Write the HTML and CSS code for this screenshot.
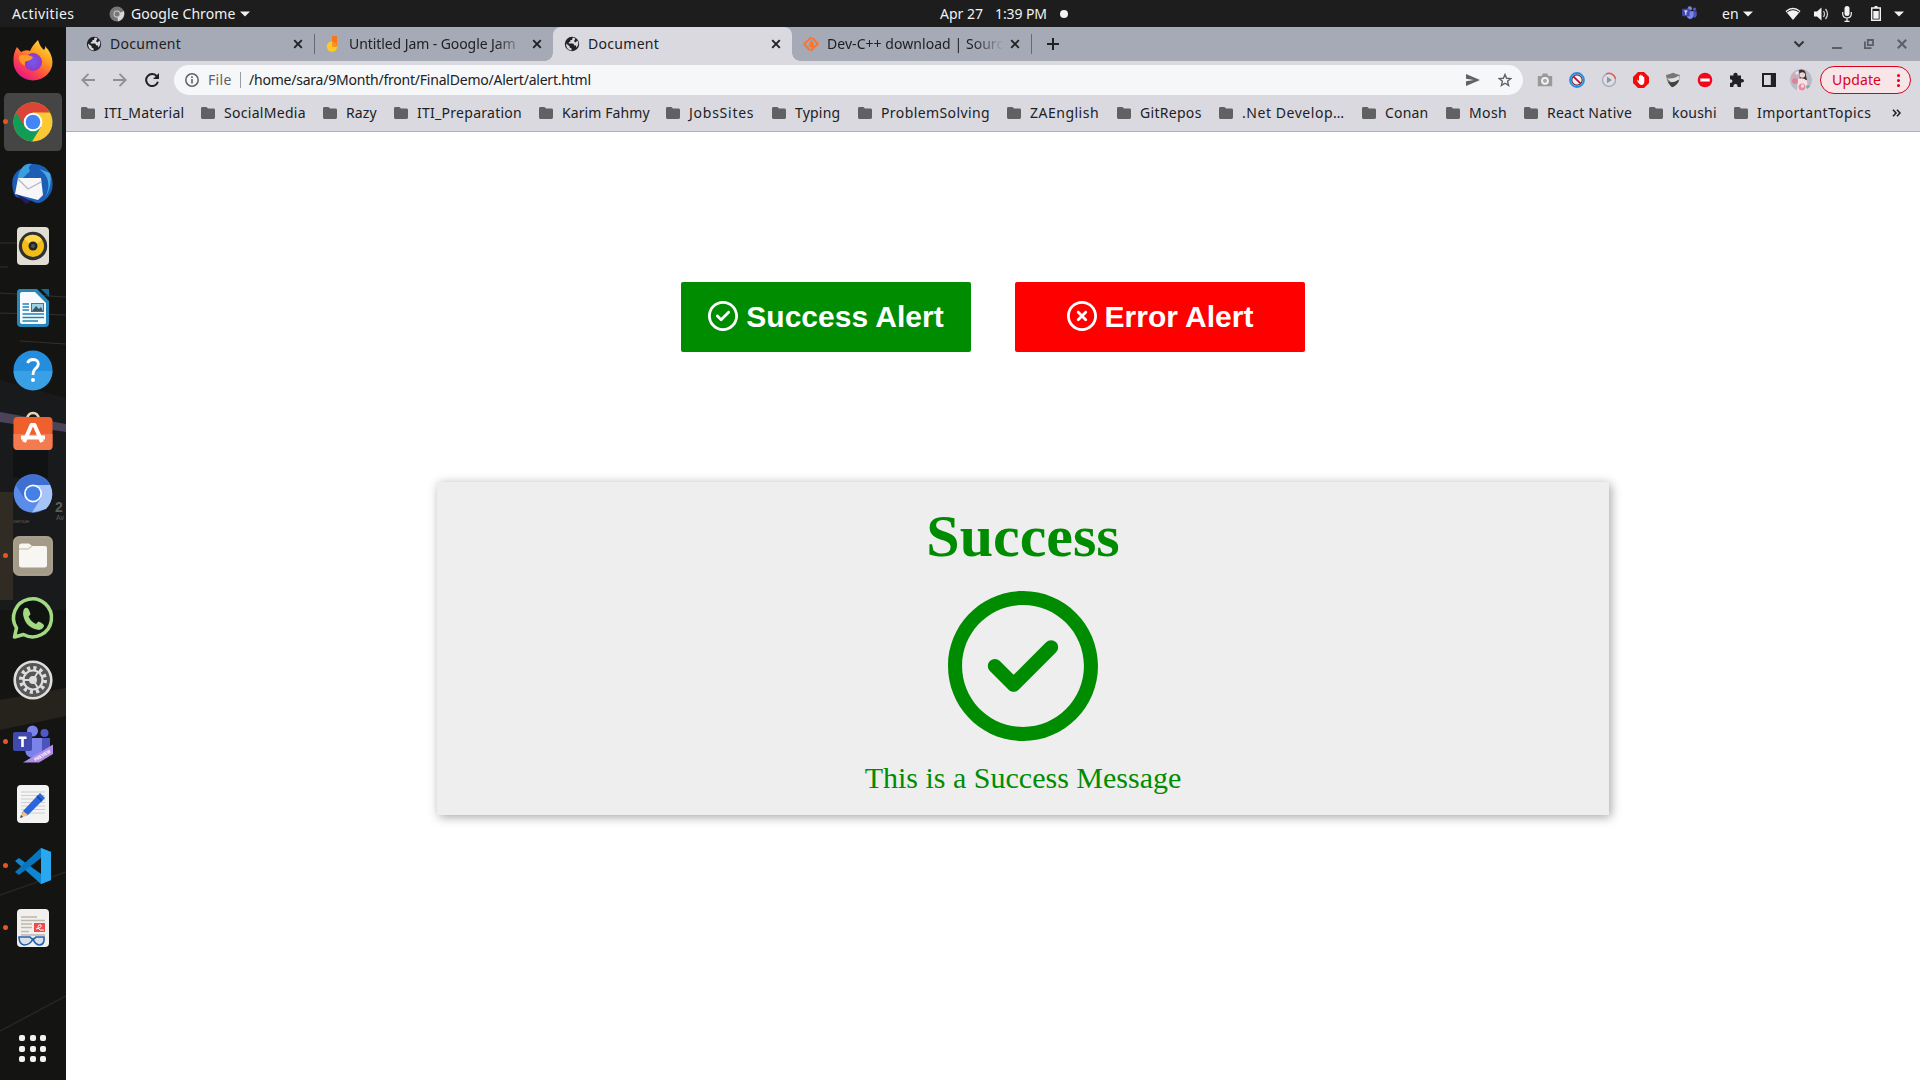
FILE: index.html
```html
<!DOCTYPE html>
<html lang="en">
<head>
<meta charset="utf-8">
<title>Document</title>
<link rel="stylesheet" href="styles.css">
</head>
<body>
<svg class="defs" width="0" height="0">
  <symbol id="folder" viewBox="0 0 14 12"><path d="M1.5 0H5.5L7 1.6H12.5Q14 1.6 14 3V10.6Q14 12 12.6 12H1.4Q0 12 0 10.6V1.4Q0 0 1.5 0z"/></symbol>
  <symbol id="close" viewBox="0 0 10 10"><path d="M1.2 1.2L8.8 8.8M8.8 1.2L1.2 8.8" fill="none" stroke="currentColor" stroke-width="1.9"/></symbol>
  <symbol id="globe" viewBox="0 0 16 16"><circle cx="8" cy="8" r="7.2" fill="#202124"/><path d="M2.2 7.4L5.6 10.2V11.6L7.6 12.4V14.4Q3 13.8 2.2 9.4zM9.3 1.5Q7.6 2.4 8.2 4H6.4V5.6L4.8 6.2V7.6H9.2L10.4 9.6H12L12.4 11.8Q15.6 8 13.4 4.6L11.6 6.4L10 5.2L11.4 2.5z" fill="#dad9df"/></symbol>
  <symbol id="caret" viewBox="0 0 10 6"><path d="M0 .4H10L5 5.6z" fill="#f2f2f2"/></symbol>
  <symbol id="ring" viewBox="0 0 512 512"><path fill="currentColor" d="M512 256C512 397.4 397.4 512 256 512C114.6 512 0 397.4 0 256C0 114.6 114.6 0 256 0C397.4 0 512 114.6 512 256zM256 48C141.1 48 48 141.1 48 256C48 370.9 141.1 464 256 464C370.9 464 464 370.9 464 256C464 141.1 370.9 48 256 48z"/></symbol>
  <symbol id="check-circle" viewBox="0 0 512 512"><use href="#ring"/><path fill="currentColor" d="M369 209L241 337c-9.400 9.400-24.600 9.400-33.900 0l-64-64c-9.400-9.400-9.400-24.600 0-33.900s24.600-9.400 33.900 0l47 47L335 175c9.400-9.400 24.600-9.400 33.900 0s9.400 24.600 0 33.900z"/></symbol>
  <symbol id="x-circle" viewBox="0 0 512 512"><use href="#ring"/><path fill="currentColor" d="M175 175c9.400-9.400 24.600-9.400 33.900 0l47 47 47-47c9.400-9.400 24.600-9.400 33.900 0s9.400 24.600 0 33.900l-47 47 47 47c9.400 9.400 9.400 24.600 0 33.900s-24.600 9.400-33.900 0l-47-47-47 47c-9.400 9.400-24.600 9.400-33.900 0s-9.400-24.600 0-33.900l47-47-47-47c-9.400-9.400-9.400-24.600 0-33.900z"/></symbol>
  <symbol id="teams" viewBox="0 0 40 38"><circle cx="31.500" cy="8" r="4" fill="#5059c9"/><path d="M22 13H37V24Q36 30 30 30z" fill="#4b53bc"/><circle cx="19.500" cy="6" r="5.500" fill="#7b83eb"/><path d="M12 13H29V25Q28 33 20.500 33Q13 33 12 25z" fill="#7b83eb"/><rect y="7" width="19" height="19" rx="2" fill="#4149ae"/><path d="M5.500 11.500H13.500V14H10.800V22H8.200V14H5.500z" fill="#fff"/></symbol>
</svg>

<header class="topbar">
  <span class="activities">Activities</span>
  <div class="app-menu">
    <svg width="16" height="16" viewBox="0 0 16 16"><circle cx="8" cy="8" r="7.500" fill="#777"/><path d="M8 8L15 5Q16.500 12 9 15.500z" fill="#d8d8d8"/><circle cx="8" cy="8" r="3.500" fill="#ccc"/><circle cx="8" cy="8" r="2.500" fill="#777"/></svg>
    <span class="app-name">Google Chrome</span>
    <svg width="10" height="6"><use href="#caret"/></svg>
  </div>
  <div class="clock"><span class="date">Apr 27</span><span class="time">1:39 PM</span><i class="dot"></i></div>
  <div class="tray">
    <svg class="tray-teams" width="16" height="15"><use href="#teams"/></svg>
    <span class="lang">en</span>
    <svg class="lang-caret" width="10" height="6"><use href="#caret"/></svg>
    <svg class="wifi" width="16" height="14" viewBox="0 0 16 14"><path d="M.5 4Q8-2.500 15.500 4L8 13z" fill="#f2f2f2"/><path d="M2 5Q8 .4 14 5" fill="none" stroke="#1d1d1d" stroke-width="1"/></svg>
    <svg class="volume" width="15" height="14" viewBox="0 0 15 14"><path d="M0 4.500H3L7.500.5V13.500L3 9.500H0z" fill="#f2f2f2"/><path d="M9.500 4Q11.500 7 9.500 10M11.500 2Q15.500 7 11.500 12" fill="none" stroke="#ccc" stroke-width="1.300"/></svg>
    <svg class="mic" width="10" height="16" viewBox="0 0 10 16"><rect x="2.500" width="5" height="10" rx="2.500" fill="#f2f2f2"/><path d="M.7 6V8Q1 12 5 12Q9 12 9.300 8V6M5 12V15M2.500 15.400H7.500" fill="none" stroke="#f2f2f2" stroke-width="1.200"/></svg>
    <svg class="battery" width="10" height="15" viewBox="0 0 10 15"><path d="M.7 2H9.300V14.300H.7zM3.500 .7H6.500" fill="none" stroke="#f2f2f2" stroke-width="1.400"/><path d="M2.300 5H7.700V12.700H2.300z" fill="#f2f2f2"/></svg>
    <svg width="10" height="6"><use href="#caret"/></svg>
  </div>
</header>

<div class="desktop">
  <nav class="dock">
    <svg class="wallpaper" width="66" height="1053" viewBox="0 27 66 1053">
      <rect y="27" width="66" height="1053" fill="#141513"/>
      <path d="M0 243H28M0 267H8M0 293L66 297M0 313L66 315M20 341L66 344" stroke="#34302a" stroke-width="1"/>
      <path d="M0 380L66 398V610H0z" fill="#191a1b"/><path d="M0 412L66 424V432L0 422z" fill="#4a4359"/><path d="M0 492H13V600H0z" fill="#302c23"/><path d="M13 430H48V478H13z" fill="#111214"/><path d="M0 700L66 688V716L0 730z" fill="#26231d"/><path d="M0 895L66 872M0 1031L66 996" stroke="#262623" stroke-width="1.500"/>
      <g fill="#5b5b57" font-family="Liberation Sans, sans-serif"><text x="55" y="512" font-size="14" font-weight="bold">2</text><text x="56" y="520" font-size="7">Av</text><text x="13" y="523" font-size="6">venue</text></g>
    </svg>
    <div class="launcher"><svg width="40" height="42" viewBox="0 0 40 42">
      <defs><linearGradient id="ff" x1="1" y1="0" x2=".3" y2="1"><stop offset="0" stop-color="#fff44f"/><stop offset=".4" stop-color="#ffa021"/><stop offset=".72" stop-color="#ff4a45"/><stop offset="1" stop-color="#e61587"/></linearGradient><radialGradient id="fp"><stop offset="0" stop-color="#6f5bf3"/><stop offset="1" stop-color="#9138c6"/></radialGradient></defs>
      <path d="M4 8L8 13Q13 10 17 12Q19 7 25 1Q27 8 31 11Q33 9 32 7Q39 14 39.500 23A19.500 18.500 0 0 1 .5 23Q0 14 4 8z" fill="url(#ff)"/><circle cx="20" cy="23" r="9" fill="url(#fp)"/><path d="M6 17Q12 14 20 18Q19 21 14 22Q11 22 12 27Q5 23 6 17z" fill="#ff9a25"/></svg></div>
    <div class="launcher active running"><svg width="40" height="40" viewBox="0 0 40 40"><circle cx="20" cy="20" r="19.500" fill="#fcc934"/><path d="M20 20L3 10.500A19.500 19.500 0 0 0 19 39.500L28 25z" fill="#109d58"/><path d="M20 10.500H37A19.500 19.500 0 0 0 3 10.300L12 25z" fill="#db4437"/><circle cx="20" cy="20" r="9.300" fill="#fff"/><circle cx="20" cy="20" r="7.300" fill="#4285f4"/></svg></div>
    <div class="launcher"><svg width="42" height="42" viewBox="0 0 42 42"><path d="M2 31Q-4 12 10 5Q14 0 20 1Q33 0 39 12Q44 27 34 36Q27 43 20 38L4 34z" fill="#1c5eb5"/><path d="M10 5Q14 0 20 1Q15 4 18 8L8 18Q3 14 10 5z" fill="#3b9edd"/><path d="M27 6Q42 16 33 35Q41 22 38 10z" fill="#48a8e5"/><path d="M6 15L29 15L31 32L26 37L3 31z" fill="#f7f7fa"/><path d="M6 16L16 26L29 19" fill="none" stroke="#b5b5bd" stroke-width="1.300"/><path d="M4 31L19 38L14 41z" fill="#241d62"/></svg></div>
    <div class="launcher"><svg width="34" height="40" viewBox="0 0 34 40"><rect x="1" y="1" width="32" height="38" rx="4" fill="#e2ddd2"/><circle cx="17" cy="20" r="14.200" fill="#2e3032"/><circle cx="17" cy="20" r="11" fill="#f3bd17"/><path d="M17 20L8 13A11 11 0 0 1 26 14z" fill="#ffd94a"/><circle cx="17" cy="20" r="4.500" fill="#242526"/><circle cx="17" cy="20" r="2" fill="#555"/></svg></div>
    <div class="launcher"><svg width="34" height="40" viewBox="0 0 34 40"><path d="M4 1H21L33 13V35Q33 39 29 39H5Q1 39 1 35V5Q1 1 4 1z" fill="#2787b9"/><path d="M25 1H33V9z" fill="#18699a"/><path d="M6 4H19L30 15V35Q30 36 28 36H6Q4 36 4 34V6Q4 4 6 4z" fill="#f8fbfd"/><path d="M6.500 16H13M6.500 19H13M6.500 22H13M6.500 26H28M6.500 29.500H28M6.500 33H22" stroke="#2481b5" stroke-width="1.500"/><rect x="15.500" y="15.500" width="12" height="8" fill="#9cd1ea" stroke="#2481b5"/><path d="M16 23L20 18L23 21L25 19L27 23z" fill="#405762"/></svg></div>
    <div class="launcher"><svg width="40" height="40" viewBox="0 0 40 40"><circle cx="20" cy="20" r="19.500" fill="#258ddd"/><path d="M.5 21H39.500A19.500 19.500 0 0 1 .5 21z" fill="#3aa0e6"/><path d="M14.500 13Q16 9.500 20 9.500Q25.500 9.700 25.300 14Q25 17 22 19Q20 21 20 25" fill="none" stroke="#fff" stroke-width="2.800"/><circle cx="20" cy="30" r="2" fill="#fff"/></svg></div>
    <div class="launcher"><svg class="up" width="40" height="40" viewBox="0 0 40 40"><path d="M14 8Q15 2 20 2Q25 2 26 8" fill="none" stroke="#e9d8b8" stroke-width="2.400"/><rect x=".5" y="6" width="39" height="33" rx="4" fill="#f0602d"/><path d="M.5 23H39.500V35Q39.500 39 35 39H5Q.5 39 .5 35z" fill="#f37b4f"/><path d="M11 31L18.500 14H21.500L29 31M8 26.500H32" fill="none" stroke="#fff" stroke-width="4" stroke-linejoin="round"/></svg></div>
    <div class="launcher"><svg class="up" width="40" height="40" viewBox="0 0 40 40"><circle cx="20" cy="20.500" r="19.300" fill="#5a8cec"/><path d="M3 12A19.300 19.300 0 0 1 37 12H20L11 25z" fill="#3f6fd0"/><path d="M22 12H37Q43 25 33 36L19 39.500L28 25z" fill="#a7c4f8"/><circle cx="20" cy="20.500" r="9" fill="#fff"/><circle cx="20" cy="20.500" r="7.300" fill="#4480e8"/></svg></div>
    <div class="launcher running"><svg width="40" height="40" viewBox="0 0 40 40"><rect x=".7" y=".7" width="38.600" height="38.600" rx="5" fill="#a39a87" stroke="#beb6a6"/><path d="M6 10Q6 7.500 8 7.500H16L19 10H32Q34 10 34 12V29Q34 31.500 31.500 31.500H8.500Q6 31.500 6 29z" fill="#f8f6f3"/><path d="M6 13H15L19 10" fill="none" stroke="#d3cbbc" stroke-width="1.500"/></svg></div>
    <div class="launcher"><svg width="42" height="42" viewBox="0 0 42 42"><path d="M4.500 31A19 19 0 1 1 11.500 37.500L2.500 40z" fill="#101411" stroke="#a3d982" stroke-width="3.500" stroke-linejoin="round"/><path d="M12 12Q15 9 17 13L18.500 17Q18 18 16.500 19.500Q19 25 24 27L26.500 24.500Q30 25.500 32 28Q32 32 27 33Q13 31 11 17Q11 14 12 12z" fill="#a3d982"/></svg></div>
    <div class="launcher"><svg width="40" height="40" viewBox="0 0 40 40"><circle cx="20" cy="20" r="18.300" fill="#565656" stroke="#dedede" stroke-width="2.600"/><circle cx="20" cy="20" r="12" fill="none" stroke="#ddd" stroke-width="4" stroke-dasharray="3.140 3.140"/><circle cx="20" cy="20" r="9.500" fill="#555" stroke="#ddd" stroke-width="2.200"/><circle cx="20" cy="20" r="4" fill="#ddd"/><path d="M20 20H10M20 20L25 12M20 20L25 28" stroke="#ddd" stroke-width="1.800"/></svg></div>
    <div class="launcher running"><svg class="down" width="40" height="38" viewBox="0 0 40 38"><use href="#teams"/><path d="M10 37.500L40 19.500V29L26 37.500z" fill="#b08de5"/><text font-size="5" font-weight="bold" fill="#fff" font-family="Liberation Sans, sans-serif" textLength="18" lengthAdjust="spacingAndGlyphs" transform="translate(22.500 36.500) rotate(-31)">PREVIEW</text></svg></div>
    <div class="launcher"><svg width="34" height="40" viewBox="0 0 34 40"><rect x="1" y="1" width="32" height="38" rx="4" fill="#f3f3f3"/><path d="M5 8H29M5 11.500H29M5 15H29M5 18.500H29M5 22H29M5 25.500H29M5 29H29" stroke="#cfcfcf"/><path d="M7 27L24 9L29 14L12 31L5 33z" fill="#2b66dc"/><path d="M7 27L12 31L5 34z" fill="#efc08e"/><path d="M21 12L26 17" stroke="#174caa" stroke-width="2"/><path d="M5 31L7 33L4 34z" fill="#444"/></svg></div>
    <div class="launcher running"><svg width="38" height="38" viewBox="0 0 38 38"><path d="M27 1L37 5V33L27 37L1 14L5 11L27 27z" fill="#0e87d2"/><path d="M27 1V11L5 28L1 25z" fill="#0875bd"/><path d="M27 1L37 5V33L27 37z" fill="#29a8f0"/></svg></div>
    <div class="launcher running"><svg width="34" height="40" viewBox="0 0 34 40"><rect x="1" y="1" width="32" height="38" rx="4" fill="#f1f0ee"/><path d="M5 9H21M5 12.500H29M5 16H16M5 19.500H16M5 23.500H13M5 27H29" stroke="#bfb7a7" stroke-width="1.600"/><rect x="18" y="15" width="11" height="9" fill="#ea4d4c"/><path d="M20 21Q26 20 25 17Q22 16 22 20Q23 23 28 22" fill="none" stroke="#fff"/><path d="M3 29H14L16 31H18L20 29H28Q29 36 24 37Q19 37 17 31Q14 37 8 37Q3 36 3 29z" fill="#d8dfe8" stroke="#245fae" stroke-width="1.600"/></svg></div>
    <div class="show-apps"><i></i><i></i><i></i><i></i><i></i><i></i><i></i><i></i><i></i></div>
  </nav>

  <section class="browser">
    <div class="tabstrip">
      <div class="tab"><svg class="favicon" width="16" height="16"><use href="#globe"/></svg><span class="title t-doc">Document</span><svg class="x" width="10" height="10"><use href="#close"/></svg></div>
      <div class="tab divided"><svg class="favicon" width="16" height="16" viewBox="0 0 16 16"><circle cx="7" cy="10.500" r="5.200" fill="#fdca26"/><path d="M7 0H12V10.500H7z" fill="#f8771d"/><path d="M7 5.300A5 5 0 0 1 12 10.500H7z" fill="#f8931d"/></svg><span class="title faded t-jam">Untitled Jam - Google Jam</span><svg class="x" width="10" height="10"><use href="#close"/></svg></div>
      <div class="tab current"><svg class="favicon" width="16" height="16"><use href="#globe"/></svg><span class="title t-doc">Document</span><svg class="x" width="10" height="10"><use href="#close"/></svg></div>
      <div class="tab"><svg class="favicon" width="16" height="16" viewBox="0 0 16 16"><path d="M6.500 14L1.200 8L8.500 1.200M9.500 2L14.800 8L7.500 14.800" fill="none" stroke="#ff7426" stroke-width="2"/><path d="M8.500 4Q12 8 10.500 10.500Q8 12.500 5.800 10.500Q5.500 8 8.500 4z" fill="#ff7426"/></svg><span class="title faded t-dev">Dev-C++ download | Sourc</span><svg class="x" width="10" height="10"><use href="#close"/></svg></div>
      <div class="newtab"><svg width="12" height="12" viewBox="0 0 12 12"><path d="M6 0V12M0 6H12" stroke="#202124" stroke-width="2"/></svg></div>
      <div class="window-controls">
        <svg width="12" height="8" viewBox="0 0 12 8"><path d="M1.500 1.500L6 6L10.500 1.500" fill="none" stroke="#333" stroke-width="2"/></svg>
        <svg width="10" height="10" viewBox="0 0 10 10"><path d="M0 9H10" stroke="#5b5e65" stroke-width="2"/></svg>
        <svg width="10" height="10" viewBox="0 0 10 10"><path d="M3.800 1H9V6.200H3.800zM.9 2.500V9.100H7.500" fill="none" stroke="#5b5e65" stroke-width="1.800"/></svg>
        <svg width="10" height="10" viewBox="0 0 10 10"><path d="M.8 .8L9.200 9.200M9.200 .8L.8 9.200" stroke="#5b5e65" stroke-width="2"/></svg>
      </div>
    </div>

    <div class="toolbar">
      <div class="nav-buttons">
        <svg width="14" height="14" viewBox="0 0 14 14"><path d="M14 7H1.500M7.500 .8L1.300 7L7.500 13.200" fill="none" stroke="#8d8d92" stroke-width="1.800"/></svg>
        <svg width="14" height="14" viewBox="0 0 14 14"><path d="M0 7H12.500M6.500 .8L12.700 7L6.500 13.200" fill="none" stroke="#8d8d92" stroke-width="1.800"/></svg>
        <svg width="14" height="14" viewBox="0 0 14 14"><path d="M12 3.500A6 6 0 1 0 12.900 8.700" fill="none" stroke="#202124" stroke-width="2"/><path d="M14 0V6H8z" fill="#202124"/></svg>
      </div>
      <div class="omnibox">
        <svg width="14" height="14" viewBox="0 0 14 14"><circle cx="7" cy="7" r="6.200" fill="none" stroke="#5f6368" stroke-width="1.500"/><path d="M7 6V10.500M7 3.300V4.900" stroke="#5f6368" stroke-width="1.600"/></svg>
        <span class="scheme">File</span><i class="rule"></i><span class="url">/home/sara/9Month/front/FinalDemo/Alert/alert.html</span>
        <svg class="send" width="14" height="12" viewBox="0 0 14 12"><path d="M0 0L14 6L0 12V7.300L8 6L0 4.700z" fill="#5f6368"/></svg>
        <svg width="14" height="14" viewBox="0 0 14 14"><path d="M7 1.500L8.600 5.300L12.800 5.600L9.600 8.300L10.600 12.400L7 10.200L3.400 12.400L4.400 8.300L1.200 5.600L5.400 5.300z" fill="none" stroke="#5f6368" stroke-width="1.400"/></svg>
      </div>
      <div class="extensions">
        <svg width="16" height="16" viewBox="0 0 16 16"><path d="M.8 4H4.500L6 1.500H10L11.500 4H15.200V14.200H.8z" fill="#999"/><circle cx="8" cy="8.800" r="3.900" fill="#f4f4f4"/><circle cx="8" cy="8.800" r="2.100" fill="#aaa"/></svg>
        <svg width="16" height="16" viewBox="0 0 16 16"><circle cx="8" cy="8" r="7" fill="#f4eef3" stroke="#2091e0" stroke-width="1.800"/><circle cx="8" cy="8" r="5.200" fill="none" stroke="#5c2a48" stroke-width="1.200"/><path d="M4.300 4.300L11.700 11.700" stroke="#a3172e" stroke-width="1.700"/></svg>
        <svg width="16" height="16" viewBox="0 0 16 16"><circle cx="8" cy="8" r="6.500" fill="#dce0e5" stroke="#a9adb4" stroke-width="1.400"/><path d="M5 1.800A6.800 6.800 0 0 1 14.500 7" fill="none" stroke="#e95b4d" stroke-width="1.400"/><path d="M6 4.700L11 8L6 11.300z" fill="#8297aa"/></svg>
        <svg width="16" height="16" viewBox="0 0 16 16"><path d="M5 0H11L16 5V11L11 16H5L0 11V5z" fill="#f20b0b"/><path d="M4.500 7.500L6 9V4Q6.500 3 7.200 4V2.800Q8 2 8.600 3V4Q9.500 3 10 4V5Q11 4.300 11.300 5.500V10Q11 13 8.500 13Q6.500 13 4.200 9z" fill="#fff"/></svg>
        <svg width="16" height="16" viewBox="0 0 16 16"><path d="M1 3Q5 2 8 .8Q11 2 15 3L14 9Q12 13.500 7 15.200Q2 12 1 3z" fill="#777"/><path d="M1.500 6Q7 8 14.500 3.500L14 8Q10 10.500 6 10z" fill="#e0e0df"/><path d="M3 10Q9 11.500 14 7.500Q13 13 7 15.200z" fill="#3f4140"/></svg>
        <svg width="16" height="16" viewBox="0 0 16 16"><circle cx="8" cy="8" r="7.300" fill="#f4061c"/><path d="M3.300 6.500H12.700V9.500H3.300z" fill="#fff"/></svg>
        <svg width="16" height="16" viewBox="0 0 16 16"><path d="M1 3.500H4.500Q4 .8 6.500 .8Q9 .8 8.500 3.500H12V7Q15 6.500 15 8.800Q15 11 12 10.500V15H8.500Q8.800 12 6.500 12Q4.200 12 4.500 15H1V11Q3.500 11 3.500 9Q3.500 7.300 1 7.300z" fill="#202124"/></svg>
        <svg width="16" height="16" viewBox="0 0 16 16"><path d="M2 2H14V14H2z" fill="none" stroke="#202124" stroke-width="2"/><path d="M9.800 2H14V14H9.800z" fill="#202124"/></svg>
      </div>
      <svg class="avatar" width="22" height="22" viewBox="0 0 22 22"><defs><clipPath id="round"><circle cx="11" cy="11" r="11"/></clipPath></defs><g clip-path="url(#round)"><path d="M0 0H22V22H0z" fill="#b9bcc7"/><path d="M9 1Q16-1 16 7L17 11L10 11Z" fill="#3f2e36"/><circle cx="12.300" cy="6" r="2.800" fill="#f4d2ca"/><path d="M8 10Q14 8 17 12L18 22H7z" fill="#f5e3e4"/><circle cx="5" cy="12" r="3" fill="#dd8298"/><circle cx="4" cy="7" r="2.500" fill="#d8a9b4"/><circle cx="7" cy="4" r="1.500" fill="#f3e4ea"/><circle cx="12" cy="18" r="3.500" fill="#e88ba4"/><circle cx="12.500" cy="17" r="1.700" fill="#fbd7dd"/><circle cx="18" cy="18" r="2" fill="#86a6ae"/></g></svg>
      <div class="update"><span>Update</span><svg width="3" height="13" viewBox="0 0 3 13"><g fill="#d9001b"><circle cx="1.500" cy="1.600" r="1.500"/><circle cx="1.500" cy="6.500" r="1.500"/><circle cx="1.500" cy="11.400" r="1.500"/></g></svg></div>
    </div>

    <div class="bookmarks">
      <div class="bm w1"><svg><use href="#folder"/></svg><span>ITI_Material</span></div>
      <div class="bm w2"><svg><use href="#folder"/></svg><span>SocialMedia</span></div>
      <div class="bm w3"><svg><use href="#folder"/></svg><span>Razy</span></div>
      <div class="bm w4"><svg><use href="#folder"/></svg><span>ITI_Preparation</span></div>
      <div class="bm w5"><svg><use href="#folder"/></svg><span>Karim Fahmy</span></div>
      <div class="bm w6"><svg><use href="#folder"/></svg><span>JobsSites</span></div>
      <div class="bm w7"><svg><use href="#folder"/></svg><span>Typing</span></div>
      <div class="bm w8"><svg><use href="#folder"/></svg><span>ProblemSolving</span></div>
      <div class="bm w9"><svg><use href="#folder"/></svg><span>ZAEnglish</span></div>
      <div class="bm w10"><svg><use href="#folder"/></svg><span>GitRepos</span></div>
      <div class="bm w11"><svg><use href="#folder"/></svg><span>.Net Develop…</span></div>
      <div class="bm w12"><svg><use href="#folder"/></svg><span>Conan</span></div>
      <div class="bm w13"><svg><use href="#folder"/></svg><span>Mosh</span></div>
      <div class="bm w14"><svg><use href="#folder"/></svg><span>React Native</span></div>
      <div class="bm w15"><svg><use href="#folder"/></svg><span>koushi</span></div>
      <div class="bm w16"><svg><use href="#folder"/></svg><span>ImportantTopics</span></div>
      <svg class="more" viewBox="0 0 9 8"><path d="M1 .8L4 4L1 7.200M5 .8L8 4L5 7.200" fill="none" stroke="#202124" stroke-width="1.600"/></svg>
    </div>

    <main class="page">
      <div class="buttons">
        <button class="btn success"><svg width="30" height="30"><use href="#check-circle"/></svg><span>Success Alert</span></button>
        <button class="btn error"><svg width="30" height="30"><use href="#x-circle"/></svg><span>Error Alert</span></button>
      </div>
      <div class="alert">
        <h1>Success</h1>
        <svg width="150" height="150"><use href="#check-circle"/></svg>
        <p>This is a Success Message</p>
      </div>
    </main>
  </section>
</div>
</body>
</html>
```
FILE: styles.css
```css
* { box-sizing: border-box; }
html, body { margin: 0; width: 1920px; height: 1080px; overflow: hidden; }
body { display: flex; flex-direction: column; font: 14px/20px "Noto Sans", "Open Sans", sans-serif; color: #202124; background: #fff; }
svg { display: block; flex: none; }
span { white-space: nowrap; }
.defs { position: absolute; }

/* System bar */
.topbar { height: 27px; flex: none; display: grid; grid-template-columns: 109px 831px 742px 1fr; align-items: center; background: #1d1d1d; color: #f2f2f2; }
.activities { padding-left: 12px; letter-spacing: .4px; }
.app-menu { display: flex; align-items: center; gap: 6px; }
.app-name { width: 103px; letter-spacing: .08px; }
.clock { display: flex; align-items: center; }
.date { width: 55px; }
.time { width: 65px; letter-spacing: -.1px; }
.dot { width: 8px; height: 8px; border-radius: 50%; background: #f2f2f2; }
.tray { display: flex; align-items: center; }
.lang { width: 21px; margin-left: 24px; }
.wifi { margin-left: 32px; }
.volume { margin-left: 13px; }
.mic { margin-left: 13px; }
.battery { margin-left: 19px; margin-right: 13px; }

/* Dock */
.desktop { display: flex; flex: 1; min-height: 0; }
.dock { width: 66px; flex: none; position: relative; display: flex; flex-direction: column; align-items: center; padding: 2px 0 18px; background: #141513; }
.wallpaper { position: absolute; left: 0; top: 0; }
.launcher { position: relative; width: 66px; height: 62px; flex: none; display: flex; align-items: center; justify-content: center; border: 2px solid transparent; border-width: 2px 4px; border-radius: 8px; background-clip: padding-box; }
.launcher svg { overflow: visible; }
.launcher.active { background-color: #454545; }
.up { margin-bottom: 3px; }
.down { margin-top: 3px; }
.running::before { content: ""; position: absolute; left: -1px; top: 26px; width: 5px; height: 5px; border-radius: 50%; background: #e95420; }
.show-apps { position: relative; margin: auto 1px 0 0; display: grid; grid-template-columns: repeat(3, 6px); gap: 4.500px; }
.show-apps i { height: 6px; border-radius: 2px; background: #f2f2f2; }

/* Browser chrome */
.browser { flex: 1; min-width: 0; display: flex; flex-direction: column; background: #dad9df; }
.tabstrip { height: 34px; display: flex; align-items: center; padding-left: 9px; background: #a6aab6; }
.tab { width: 239px; height: 34px; display: flex; align-items: center; padding: 0 11px; position: relative; }
.tab .title { width: 177px; margin-left: 8px; }
.tab .x { margin-left: 6px; }
.t-doc { letter-spacing: .3px; }
.t-jam { letter-spacing: -.08px; }
.t-dev { letter-spacing: .05px; }
.divided { background: linear-gradient(#676a73, #676a73) left center / 1px 20px no-repeat; }
.divided, .divided + .tab { left: -1px; }
.faded { -webkit-mask-image: linear-gradient(to right, #000 146px, transparent 177px); mask-image: linear-gradient(to right, #000 146px, transparent 177px); }
.current { background: #dad9df; border-radius: 8px 8px 0 0; }
.current::before, .current::after { content: ""; position: absolute; bottom: 0; width: 8px; height: 8px; }
.current::before { left: -8px; background: radial-gradient(circle at 0 0, transparent 7.500px, #dad9df 8px); }
.current::after { right: -8px; background: radial-gradient(circle at 100% 0, transparent 7.500px, #dad9df 8px); }
.divided, .divided + .tab { left: auto; }
.newtab { border-left: 1px solid #676a73; height: 20px; display: flex; align-items: center; padding-left: 15px; }
.window-controls { margin-left: auto; display: grid; grid-template-columns: 39px 32px 33px 10px; align-items: center; margin-right: 13px; }

.toolbar { height: 38px; display: flex; align-items: center; padding-left: 15px; }
.nav-buttons { display: flex; gap: 18px; width: 93px; }
.omnibox { width: 1349px; height: 30px; display: flex; align-items: center; padding: 0 11px; border-radius: 15px; background: #f5f7f9; }
.scheme { color: #5f6368; width: 32px; margin-left: 9px; letter-spacing: .3px; }
.rule { width: 1px; height: 16px; background: #999ca1; margin-right: 8px; }
.url { letter-spacing: -.22px; }
.send { margin-left: auto; margin-right: 18px; }
.extensions { display: flex; gap: 16px; margin-left: 14px; }
.avatar { margin-left: 13px; }
.update { width: 91px; height: 28px; margin-left: 8px; display: flex; align-items: center; justify-content: space-between; padding: 0 10px 0 11px; border: 1px solid #d9001b; border-radius: 14px; background: #f8e5e7; color: #d9001b; letter-spacing: .15px; }

.bookmarks { height: 33px; display: flex; align-items: center; padding: 0 0 4px 15px; border-bottom: 1px solid #b0afb5; }
.bookmarks svg { width: 14px; height: 12px; fill: #5f6163; }
.bm { display: flex; align-items: center; gap: 9px; flex: none; }
.bookmarks .more { width: 9px; height: 8px; }
.w1 { width: 120px; letter-spacing: .2px; }
.w2 { width: 122px; letter-spacing: .3px; }
.w3 { width: 71px; letter-spacing: .1px; }
.w4 { width: 145px; letter-spacing: .27px; }
.w5 { width: 127px; letter-spacing: .1px; }
.w6 { width: 106px; letter-spacing: .75px; }
.w7 { width: 86px; letter-spacing: .2px; }
.w8 { width: 149px; letter-spacing: .4px; }
.w9 { width: 110px; letter-spacing: .5px; }
.w10 { width: 102px; letter-spacing: .3px; }
.w11 { width: 143px; letter-spacing: .55px; }
.w12 { width: 84px; letter-spacing: .2px; }
.w13 { width: 78px; letter-spacing: .4px; }
.w14 { width: 125px; letter-spacing: .25px; }
.w15 { width: 85px; letter-spacing: .2px; }
.w16 { width: 158px; letter-spacing: .4px; }

/* Page */
.page { flex: 1; background: #fff; padding: 150px 0 0; }
.buttons { display: flex; gap: 44px; margin-left: 615px; }
.btn { width: 290px; height: 70px; border: 0; border-radius: 2px; padding: 0; display: flex; align-items: center; justify-content: center; gap: 8px; color: #fff; font: bold 30px "Liberation Sans", Arial, sans-serif; }
.btn svg { margin-top: -2px; }
.success { background: #008c00; }
.error { background: #f00; }
.alert { width: 1172px; height: 333px; margin: 130px 0 0 371px; padding-top: 20px; display: flex; flex-direction: column; align-items: center; background: #eee; color: #008c00; box-shadow: 2px 2px 10px rgba(0, 0, 0, .36); font-family: "Liberation Serif", "Times New Roman", serif; }
.alert h1 { margin: 0 0 20px; font-size: 60px; line-height: 69px; }
.alert p { margin: 20px 0 0; font-size: 30px; line-height: 34px; }
```
